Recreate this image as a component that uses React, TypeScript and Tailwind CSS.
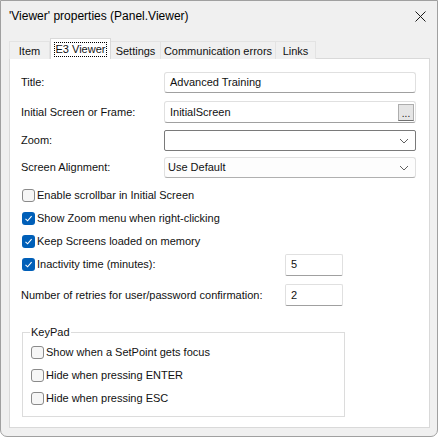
import React from 'react'

const font = { fontFamily: '"Liberation Sans", Arial, sans-serif' }

function Check({ checked }: { checked?: boolean }) {
  if (checked) {
    return (
      <span className="w-[13px] h-[13px] rounded-[3px] bg-[#005fb8] flex items-center justify-center shrink-0">
        <svg width="9" height="9" viewBox="0 0 9 9">
          <path d="M1.5 4.8 L3.6 6.8 L7.6 2.2" fill="none" stroke="#fff" strokeWidth="1.1" />
        </svg>
      </span>
    )
  }
  return <span className="w-[13px] h-[13px] rounded-[3px] border border-[#8a8a8a] bg-[#f6f6f6] shrink-0" />
}

function Chevron() {
  return (
    <svg width="10" height="6" viewBox="0 0 10 6" className="ml-auto mr-[6px]">
      <path d="M1 1 L5 5 L9 1" fill="none" stroke="#606060" strokeWidth="1" />
    </svg>
  )
}

function CheckRow({ label, checked }: { label: string; checked?: boolean }) {
  return (
    <div className="h-[23px] flex items-center gap-[2px]">
      <Check checked={checked} />
      <span>{label}</span>
    </div>
  )
}

export default function App() {
  const tabs = [
    { name: 'Item', w: 'w-[41px] border-l' },
    { name: 'E3 Viewer', w: 'w-[61px]', active: true },
    { name: 'Settings', w: 'w-[50px]' },
    { name: 'Communication errors', w: 'w-[115px]' },
    { name: 'Links', w: 'w-[40px]' },
  ]

  return (
    <div
      className="w-[438px] h-[437px] bg-[#f0f0f0] border border-[#a0a0a0] rounded-b-[7px] text-[11px] text-[#111] flex flex-col overflow-hidden"
      style={font}
    >
      {/* Title bar */}
      <div className="h-[30px] flex items-center pl-[8px] pr-[7px] text-[12px] text-black">
        <span>'Viewer' properties (Panel.Viewer)</span>
        <svg width="11" height="11" viewBox="0 0 11 11" className="ml-auto mr-[4px]">
          <path d="M0.5 0.5 L10.5 10.5 M10.5 0.5 L0.5 10.5" stroke="#1a1a1a" strokeWidth="1" />
        </svg>
      </div>

      {/* Tabs */}
      <div className="mt-[7px] pl-[8px] flex items-end h-[21px] relative z-10 whitespace-nowrap">
        {tabs.map((t) =>
          t.active ? (
            <div
              key={t.name}
              className={`${t.w} h-[21px] bg-white border border-b-0 border-[#d9d9d9] flex items-start justify-center pt-[3px]`}
            >
              <span className="border border-dotted border-black px-[1px] leading-[13px]">{t.name}</span>
            </div>
          ) : (
            <div
              key={t.name}
              className={`${t.w} h-[18px] bg-[#f0f0f0] border-t border-r border-[#e3e3e3] flex items-center justify-center pt-[2px]`}
            >
              {t.name}
            </div>
          )
        )}
      </div>

      {/* Panel */}
      <div className="-mt-[1px] ml-[8px] w-[421px] h-[370px] bg-white border border-[#d9d9d9] pl-[11px] pr-[13px] pt-[13px]">
        <div className="flex flex-col">
          <div className="h-[21px] flex items-center">
            <span className="w-[143px]">Title:</span>
            <div className="flex-1 h-[21px] border border-[#e0e0e0] border-b-[#a0a0a0] rounded-[3px] flex items-center pl-[5px]">
              Advanced Training
            </div>
          </div>

          <div className="mt-[8px] h-[22px] flex items-center">
            <span className="w-[143px]">Initial Screen or Frame:</span>
            <div className="flex-1 h-[22px] border border-[#e0e0e0] border-b-[#a0a0a0] rounded-[3px] flex items-center pl-[5px] pr-[1px]">
              InitialScreen
              <div className="ml-auto w-[16px] h-[17px] bg-[#e5e5e5] border border-[#adadad] border-b-[#707070] flex items-end justify-center leading-[12px] text-[10px]">
                ...
              </div>
            </div>
          </div>

          <div className="mt-[7px] h-[21px] flex items-center">
            <span className="w-[143px]">Zoom:</span>
            <div className="flex-1 h-[21px] border border-[#7a7a7a] rounded-[2px] flex items-center">
              <Chevron />
            </div>
          </div>

          <div className="mt-[6px] h-[21px] flex items-center">
            <span className="w-[143px]">Screen Alignment:</span>
            <div className="flex-1 h-[21px] border border-[#e0e0e0] border-b-[#b0b0b0] rounded-[3px] bg-[#fdfdfd] flex items-center pl-[3px]">
              Use Default
              <Chevron />
            </div>
          </div>

          <div className="mt-[6px] flex flex-col pl-[1px]">
            <CheckRow label="Enable scrollbar in Initial Screen" />
            <CheckRow label="Show Zoom menu when right-clicking" checked />
            <CheckRow label="Keep Screens loaded on memory" checked />
            <div className="h-[23px] flex items-center gap-[2px]">
              <Check checked />
              <span className="w-[246px]">Inactivity time (minutes):</span>
              <div className="w-[58px] h-[22px] border border-[#e0e0e0] border-b-[#a0a0a0] rounded-[2px] flex items-center pl-[5px]">
                5
              </div>
            </div>
          </div>

          <div className="mt-[8px] h-[22px] flex items-center">
            <span className="w-[264px]">Number of retries for user/password confirmation:</span>
            <div className="w-[58px] h-[22px] border border-[#e0e0e0] border-b-[#a0a0a0] rounded-[2px] flex items-center pl-[5px]">
              2
            </div>
          </div>

          <fieldset className="mt-[19px] ml-[1px] w-[323px] h-[92px] border border-[#dcdcdc] pl-[8px]">
            <legend className="-ml-[1px] px-[1px] leading-[14px]">KeyPad</legend>
            <div className="flex flex-col mt-[2px]">
              <CheckRow label="Show when a SetPoint gets focus" />
              <CheckRow label="Hide when pressing ENTER" />
              <CheckRow label="Hide when pressing ESC" />
            </div>
          </fieldset>
        </div>
      </div>
    </div>
  )
}
